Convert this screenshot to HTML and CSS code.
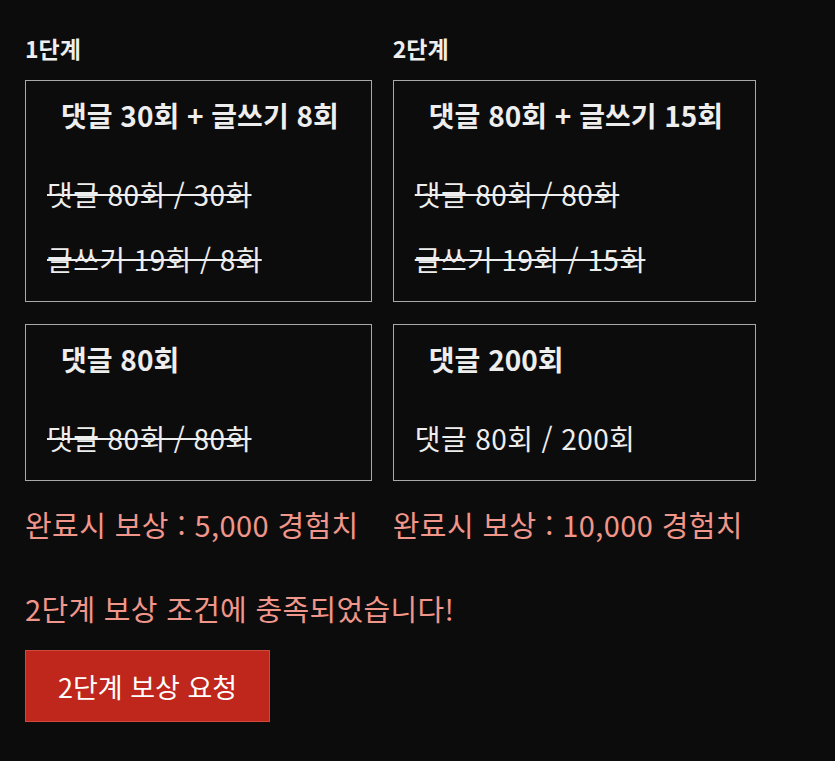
FILE: index.html
```html
<!DOCTYPE html>
<html lang="ko">
<head>
    <meta charset="UTF-8">
    <meta name="viewport" content="width=device-width, initial-scale=1.0">
    <title>단계별 보상</title>
    <link rel="stylesheet" href="styles.css">
</head>
<body>
    <div class="stages">
        <div class="stage">
            <h3 class="stage-name">1단계</h3>
            <div class="mission">
                <h4>댓글 30회 + 글쓰기 8회</h4>
                <p class="done">댓글 80회 / 30회</p>
                <p class="done">글쓰기 19회 / 8회</p>
            </div>
            <div class="mission">
                <h4>댓글 80회</h4>
                <p class="done">댓글 80회 / 80회</p>
            </div>
            <p class="reward">완료시 보상 : 5,000 경험치</p>
        </div>
        <div class="stage">
            <h3 class="stage-name">2단계</h3>
            <div class="mission">
                <h4>댓글 80회 + 글쓰기 15회</h4>
                <p class="done">댓글 80회 / 80회</p>
                <p class="done">글쓰기 19회 / 15회</p>
            </div>
            <div class="mission">
                <h4>댓글 200회</h4>
                <p>댓글 80회 / 200회</p>
            </div>
            <p class="reward">완료시 보상 : 10,000 경험치</p>
        </div>
    </div>

    <p class="notice">2단계 보상 조건에 충족되었습니다!</p>
    <button class="request-btn">2단계 보상 요청</button>
</body>
</html>
```

FILE: styles.css
```css
body {
    font-family: "Noto Sans CJK KR", "Noto Sans", sans-serif;
    background-color: #0c0c0c;
    color: #eeeeee;
    margin: 0;
    padding: 33px 25px 0;
}
h3, h4, p {
    margin: 0;
}
.stages {
    display: flex;
    gap: 21px;
    align-items: flex-start;
}
.stage {
    display: flex;
    flex-direction: column;
}
.stage-name {
    font-size: 23px;
    line-height: 30px;
    font-weight: 700;
    margin-bottom: 17px;
}
.mission {
    border: 1px solid #a9a9a9;
    padding: 17px 21px 22px;
    margin-bottom: 22px;
}
.mission h4 {
    font-size: 28px;
    line-height: 35px;
    font-weight: 700;
    padding: 0 13px 0 14px;
    margin-right: -2px;
    margin-bottom: 41px;
    white-space: nowrap;
}
.mission p {
    font-size: 28px;
    line-height: 40px;
    letter-spacing: 0.4px;
    white-space: nowrap;
}
.mission p + p {
    margin-top: 25px;
}
.done {
    text-decoration: line-through;
    text-decoration-thickness: 2px;
}
.reward {
    color: #f0968a;
    font-size: 29px;
    line-height: 40px;
    letter-spacing: 0.4px;
    margin-top: 1px;
    white-space: nowrap;
}
.notice {
    color: #f0968a;
    font-size: 29px;
    line-height: 40px;
    letter-spacing: 0.3px;
    margin-top: 44px;
}
.request-btn {
    font-family: inherit;
    margin-top: 22px;
    height: 72px;
    padding: 0 32px;
    font-size: 27px;
    color: #ffffff;
    background-color: #c0271c;
    border: 1px solid #d0493c;
    cursor: pointer;
}
```
